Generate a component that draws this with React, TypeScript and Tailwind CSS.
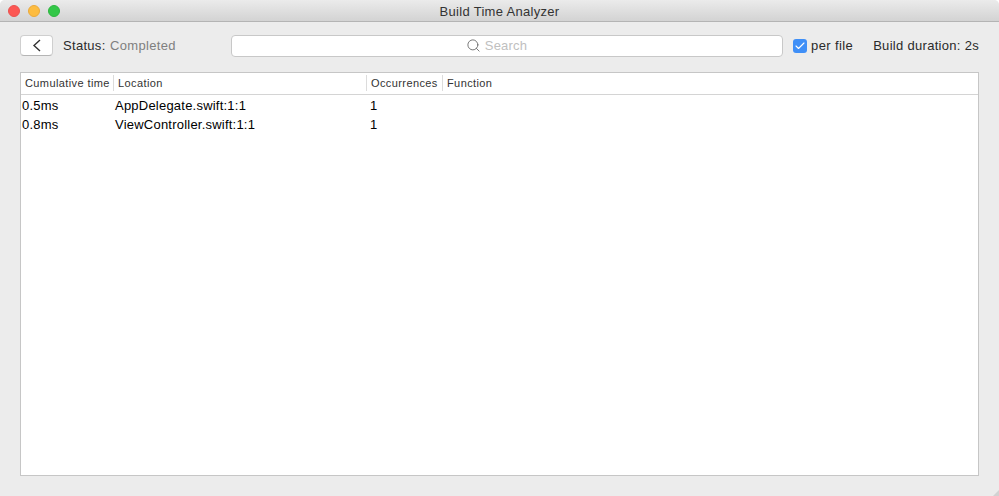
import React from 'react';
import { Search, Check } from 'lucide-react';

const rows = [
    { time: '0.5ms', location: 'AppDelegate.swift:1:1', occurrences: '1' },
    { time: '0.8ms', location: 'ViewController.swift:1:1', occurrences: '1' },
];

const App: React.FC = () => {
    return (
        <div className="relative w-[999px] h-[496px] flex flex-col overflow-hidden rounded-t-[5px] bg-[#ececec] font-['Liberation_Sans',sans-serif] text-[13px] text-[#2a2a2a]">
            {/* title bar */}
            <div className="h-[22px] shrink-0 flex items-center justify-center relative border-b border-[#b4b4b4] bg-gradient-to-b from-[#ebebeb] to-[#d3d3d3]">
                <div className="absolute left-[8px] top-[5px] flex gap-[8px]">
                    <span className="w-3 h-3 rounded-full bg-[#fc5753] border border-[#e9524f]" />
                    <span className="w-3 h-3 rounded-full bg-[#fdbc40] border border-[#eaa93a]" />
                    <span className="w-3 h-3 rounded-full bg-[#33c748] border border-[#2db53f]" />
                </div>
                <span className="mt-[1px] text-[13px] leading-none tracking-[0.3px] text-[#333]">Build Time Analyzer</span>
            </div>

            {/* toolbar */}
            <div className="h-[50px] shrink-0 flex items-center pl-[20px] pr-[20px] pb-[3px]">
                <button className="w-[33px] h-[21px] flex items-center justify-center bg-white rounded-[4px] border border-[#cfcfcf] border-b-[#b5b5b5]">
                    <svg width="9" height="13" viewBox="0 0 9 13" fill="none" stroke="#333" strokeWidth="1.4">
                        <path d="M8 1 L2 6.5 L8 12" />
                    </svg>
                </button>
                <span className="ml-[10px] w-[42px] tracking-[0.3px]">Status:</span>
                <span className="ml-[5px] w-[121px] tracking-[0.33px] text-[#7f7f7f]">Completed</span>
                <div className="w-[552px] h-[22px] flex items-center justify-center bg-white rounded-[4px] border border-[#c8c8c8]">
                    <div className="flex items-center mr-[21px]">
                        <Search size={15} strokeWidth={1.4} className="text-[#666]" />
                        <span className="ml-[4px] tracking-[0.2px] text-[#c0c0c0]">Search</span>
                    </div>
                </div>
                <span className="ml-[10px] w-[14px] h-[14px] flex items-center justify-center rounded-[3px] bg-[#3f8ff7]">
                    <Check size={12} strokeWidth={2.2} className="text-white" />
                </span>
                <span className="ml-[4px] tracking-[0.4px]">per file</span>
                <span className="ml-auto tracking-[0.3px]">Build duration: 2s</span>
            </div>

            {/* table */}
            <div className="mx-[20px] h-[404px] shrink-0 bg-white border border-[#c6c6c6]">
                <div className="h-[22px] flex items-center pb-[1px] text-[11px] tracking-[0.4px] text-[#333] border-b border-[#d4d4d4]">
                    <div className="w-[93px] h-[16px] pl-[4px] leading-[16px] border-r border-[#dcdcdc] whitespace-nowrap">Cumulative time</div>
                    <div className="w-[253px] h-[16px] pl-[4px] leading-[16px] border-r border-[#dcdcdc]">Location</div>
                    <div className="w-[76px] h-[16px] pl-[4px] leading-[16px] border-r border-[#dcdcdc]">Occurrences</div>
                    <div className="pl-[4px] h-[16px] leading-[16px]">Function</div>
                </div>
                <div className="pt-[1px] text-black tracking-[0.22px]">
                    {rows.map((row) => (
                        <div key={row.location} className="h-[19px] flex items-center">
                            <div className="w-[93px] pl-[1px]">{row.time}</div>
                            <div className="w-[255px] pl-[1px]">{row.location}</div>
                            <div className="pl-[1px]">{row.occurrences}</div>
                        </div>
                    ))}
                </div>
            </div>

            {/* resize corner */}
            <svg className="absolute right-0 bottom-0" width="6" height="6" viewBox="0 0 6 6">
                <path d="M6 0 L6 6 L0 6 Z" fill="#d2d2d2" />
            </svg>
        </div>
    );
};

export default App;
